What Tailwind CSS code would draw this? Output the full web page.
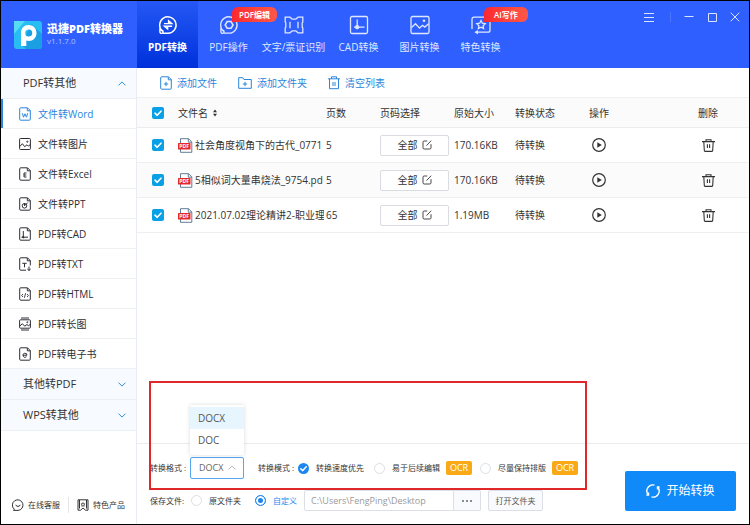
<!DOCTYPE html>
<html lang="zh-CN">

<head>
    <meta charset="UTF-8">
    <meta name="viewport" content="width=device-width, initial-scale=1.0">
    <title>迅捷PDF转换器</title>
    <script src="https://cdn.jsdelivr.net/npm/@tailwindcss/browser@4"></script>
</head>

<body class="font-['Open_Sans','Noto_Sans_CJK_SC',sans-serif] text-[10px] leading-4 text-[#333]">
    <!-- shared icons -->
    <svg class="hidden">
        <symbol id="page" viewBox="0 0 12 14">
            <path d="M8.5 .8H1.7a1 1 0 0 0-1 1v10.4a1 1 0 0 0 1 1h8.6a1 1 0 0 0 1-1V3.6zM8.3 1v2.8h3" fill="none" stroke="currentColor" />
        </symbol>
        <symbol id="pdf" viewBox="0 0 15 15">
            <path d="M2.5 .7h8l3.3 3.2v10.4H2.5z" fill="#fff" stroke="#4f6f8d" stroke-width=".9" />
            <path d="M10.3 .8v3.4h3.4" fill="none" stroke="#4f6f8d" stroke-width=".9" />
            <rect x="0" y="5" width="12.5" height="6.5" rx=".6" fill="#e5282c" />
            <text x="6.2" y="10.2" fill="#fff" font-size="5.2" font-weight="bold" text-anchor="middle">PDF</text>
        </symbol>
        <symbol id="tick" viewBox="0 0 12 12">
            <path d="M3 6.2l2.2 2.1L9 4.2" fill="none" stroke="#fff" stroke-width="1.6" stroke-linecap="round" stroke-linejoin="round" />
        </symbol>
        <symbol id="edit" viewBox="0 0 10 10">
            <path d="M5.2 1H2.2A1.2 1.2 0 0 0 1 2.2v5.6A1.2 1.2 0 0 0 2.2 9h5.6A1.2 1.2 0 0 0 9 7.8V4.2M4.5 5.6L9.2 .7" fill="none" stroke="currentColor" stroke-width=".9" />
        </symbol>
        <symbol id="play" viewBox="0 0 14 14">
            <circle cx="7" cy="7" r="6.3" fill="none" stroke="currentColor" stroke-width="1.2" />
            <path d="M5.3 4.3v5.4L9.8 7z" fill="currentColor" />
        </symbol>
        <symbol id="trash" viewBox="0 0 13 13">
            <path d="M0 2.6h13M4 2.4V.7h5v1.7M1.8 2.8l.5 8.4a1.2 1.2 0 0 0 1.2 1.2h6a1.2 1.2 0 0 0 1.2-1.2l.5-8.400M5.400 5.300v3.800M7.600 5.300v3.800" fill="none" stroke="currentColor" stroke-width="1.1" />
        </symbol>
        <symbol id="up" viewBox="0 0 8 5">
            <path d="M.5 4.4L4 .9l3.5 3.5" fill="none" stroke="currentColor" />
        </symbol>
        <symbol id="down" viewBox="0 0 8 5">
            <path d="M.5 .6L4 4.1 7.5 .6" fill="none" stroke="currentColor" />
        </symbol>
    </svg>

    <div class="relative flex h-screen flex-col border border-black bg-white">
        <header class="flex h-[67px] shrink-0 bg-[#2f60ff] text-white">
            <div class="flex w-[136px] shrink-0 items-center gap-[5px] pl-[13px]">
                <svg class="size-7 shrink-0" viewBox="0 0 28 28">
                    <rect width="28" height="28" rx="3" fill="#28bdf3" />
                    <path d="M0 0h11L0 13z" fill="#56dcf5" />
                    <path d="M17 3l11 10v12a3 3 0 0 1-3 3H12L8 24z" fill="#1697dc" opacity=".75" />
                    <path fill-rule="evenodd" d="M7 25V12C7 7 10 4 14.600 4S22.500 7.300 22.500 12s-3.300 8-7.700 8c-1 0-1.800-.2-2.500-.5V25zM14.700 8.500a3.500 3.500 0 1 0 0 7 3.500 3.500 0 0 0 0-7z" fill="#fff" />
                </svg>
                <div>
                    <h1 class="text-[11px] leading-3 font-black whitespace-nowrap">迅捷PDF转换器</h1>
                    <p class="text-[8px] leading-3 text-[#a9c0ff]">v1.1.7.0</p>
                </div>
            </div>
            <nav class="flex text-[#dfe7ff]">
                <a href="#" class="flex w-[61px] flex-col items-center gap-1 bg-linear-to-b from-[#2457f5] to-[#0030da] pt-3.5 font-bold text-white">
                    <svg class="size-5" viewBox="0 0 20 20" fill="none" stroke="currentColor" stroke-width="1.4">
                        <path d="M4.5 16.200A8.200 8.200 0 1 1 10 18.200H4.800M1.900 11v5.800a1.600 1.600 0 0 0 3.200 0c0-1-.7-1.600-1.600-1.600" />
                        <path d="M6 8.600h7.800L10.600 5.800v2.600M14.200 11.200H6.400l3.200 2.800v-2.600" />
                    </svg>
                    PDF转换
                </a>
                <a href="#" class="relative flex w-[61px] flex-col items-center gap-1 pt-3.5">
                    <svg class="size-5" viewBox="0 0 20 20" fill="none" stroke="currentColor" stroke-width="1.3">
                        <path d="M4.5 16.200A8.200 8.200 0 1 1 10 18.200H4.800M1.900 11v5.800a1.600 1.600 0 0 0 3.200 0c0-1-.7-1.600-1.600-1.600" />
                        <path d="M8.200 6.500h3.800l2 3.400-2 3.400H8.200l-2-3.400z" stroke-width="1.600" />
                    </svg>
                    PDF操作
                    <span class="absolute top-1.5 left-[34px] z-10 rounded-md rounded-bl-none bg-linear-to-r from-[#fb2630] to-[#ff5747] px-[7px] text-[8px] leading-[15px] font-semibold whitespace-nowrap text-white">PDF编辑</span>
                </a>
                <a href="#" class="flex w-[69px] flex-col items-center gap-1 pt-3.5 whitespace-nowrap">
                    <svg class="size-5" viewBox="0 0 20 20" fill="none" stroke="currentColor" stroke-width="1.3">
                        <path d="M1.200 2.200h4.800L8.200 4.200h3.600L14 2.200h4.800v4.800l-.6 1v4l.6 1v4.800H14l-2.200-2H8.200L6 17.800H1.200V13l.6-1V8l-.6-1zM6 6.800v6.400M14 6.800v6.400" />
                    </svg>
                    文字/票证识别
                </a>
                <a href="#" class="flex w-[61px] flex-col items-center gap-1 pt-3.5">
                    <svg class="size-5" viewBox="0 0 20 20" fill="none" stroke="currentColor" stroke-width="1.3">
                        <rect x="1.500" y="1.500" width="17" height="17" rx="1.500" />
                        <path d="M8.200 4.500v9M5 12.200h10.500" />
                        <circle cx="8.200" cy="12.200" r="1.500" fill="currentColor" />
                    </svg>
                    CAD转换
                </a>
                <a href="#" class="flex w-[61px] flex-col items-center gap-1 pt-3.5">
                    <svg class="size-5" viewBox="0 0 20 20" fill="none" stroke="currentColor" stroke-width="1.3">
                        <rect x="1" y="1.500" width="18" height="17" rx="1.500" />
                        <path d="M1.500 12.500l4-3.800 4 4.400 3-2.800 2.200 1.800 4-3.400" />
                        <circle cx="14" cy="5.800" r="1.300" fill="currentColor" stroke="none" />
                    </svg>
                    图片转换
                </a>
                <a href="#" class="relative flex w-[61px] flex-col items-center gap-1 pt-3.5">
                    <svg class="size-5" viewBox="0 0 20 20" fill="none" stroke="currentColor" stroke-width="1.3">
                        <path d="M1 14V4.200a2 2 0 0 1 2-2h14a2 2 0 0 1 2 2v11a2 2 0 0 1-2 2H4.500" />
                        <path d="M7 15l-3.500 2.200L7 19.400z" fill="currentColor" stroke="none" />
                        <path d="M10 5.500l1.300 2.700 2.900.4-2.100 2.100.5 2.900-2.600-1.400-2.600 1.400.5-2.900-2.100-2.100 2.900-.4z" />
                    </svg>
                    特色转换
                    <span class="absolute top-1.5 left-[34px] rounded-md rounded-bl-none bg-linear-to-r from-[#fb2630] to-[#ff5747] px-2.5 text-[8px] leading-[15px] font-semibold whitespace-nowrap text-white">AI写作</span>
                </a>
            </nav>
            <div class="ml-auto flex h-8 items-center gap-[13px] pr-[9px] text-[#dbe4ff]">
                <button aria-label="菜单" class="border-r border-[#4a75ff] pr-4">
                    <svg class="size-2.5" viewBox="0 0 10 10" stroke="currentColor"><path d="M0 1.500h10M0 5.500h10M0 9.500h10" /></svg>
                </button>
                <button aria-label="最小化">
                    <svg class="size-2.5" viewBox="0 0 10 10" stroke="currentColor"><path d="M.5 4.500h9" /></svg>
                </button>
                <button aria-label="最大化">
                    <svg class="size-2.5" viewBox="0 0 10 10" stroke="currentColor" fill="none"><path d="M1.500 1.500h8v8h-8z" /></svg>
                </button>
                <button aria-label="关闭">
                    <svg class="size-2.5" viewBox="0 0 10 10" stroke="currentColor"><path d="M.7 .7l8.600 8.600M9.300 .7L.7 9.300" /></svg>
                </button>
            </div>
        </header>

        <div class="flex min-h-0 flex-1">
            <aside class="flex w-[136px] shrink-0 flex-col border-r border-[#e9edf2]">
                <button class="flex h-[31px] items-center justify-between border-b border-[#eceff4] bg-[#f7faff] pr-2.5 pl-[22px] text-[11px]">
                    PDF转其他
                    <svg class="h-[5px] w-2 text-[#2e8fd8]"><use href="#up" /></svg>
                </button>
                <nav class="text-[#2d2d36] [&>a]:flex [&>a]:h-[30px] [&>a]:items-center [&>a]:gap-[7px] [&>a]:border-b [&>a]:border-[#eef0f4] [&>a]:pl-[18px] [&_svg]:h-3.5 [&_svg]:w-3">
                    <a href="#" class="relative text-[#2b85dc] before:absolute before:inset-y-0 before:left-0 before:w-0.5 before:bg-[#2b85dc]">
                        <svg viewBox="0 0 12 14" fill="none" stroke="currentColor"><use href="#page" /><path d="M3.300 6.200l1.200 4L6 6.800l1.500 3.400 1.200-4" /></svg>
                        文件转Word
                    </a>
                    <a href="#">
                        <svg viewBox="0 0 12 14" fill="none" stroke="currentColor"><rect x=".6" y="1.500" width="10.800" height="11" rx=".8" /><path d="M.8 9.500l2.600-2.800 2.300 3L8 7.800l1.300 1.300 2-1.500" /><circle cx="8.300" cy="4.700" r=".6" /></svg>
                        文件转图片
                    </a>
                    <a href="#">
                        <svg viewBox="0 0 12 14" fill="none" stroke="currentColor"><use href="#page" /><path d="M7.500 6H5v4h2.500M5 8h2.300" /></svg>
                        文件转Excel
                    </a>
                    <a href="#">
                        <svg viewBox="0 0 12 14" fill="none" stroke="currentColor"><use href="#page" /><circle cx="5.500" cy="8.800" r="2.300" /><path d="M5.500 8.800V6.300M5.500 8.800L8.800 5.500" /></svg>
                        文件转PPT
                    </a>
                    <a href="#">
                        <svg viewBox="0 0 12 14" fill="none" stroke="currentColor"><use href="#page" /><path d="M4.300 4v6.500M2.500 10.200h6.500" /><circle cx="4.300" cy="10.200" r=".7" fill="currentColor" /></svg>
                        PDF转CAD
                    </a>
                    <a href="#">
                        <svg viewBox="0 0 12 14" fill="none" stroke="currentColor"><path d="M7 13.200H1.700a1 1 0 0 1-1-1V1.800a1 1 0 0 1 1-1h6.800l2.800 2.800V8.500M8.300 1v2.800h3M3.300 6.300h4.400M5.500 6.300v4M10 9.500v4M8.300 12l1.700 1.500 1.700-1.500" /></svg>
                        PDF转TXT
                    </a>
                    <a href="#">
                        <svg viewBox="0 0 12 14" fill="none" stroke="currentColor"><use href="#page" /><path d="M4 7L2.600 8.500 4 10M8 7l1.400 1.500L8 10M6.600 6.200l-1.200 4.600" stroke-width=".9" /></svg>
                        PDF转HTML
                    </a>
                    <a href="#">
                        <svg viewBox="0 0 12 14" fill="none" stroke="currentColor"><rect x=".6" y="2.800" width="10.800" height="8.400" rx=".8" /><path d="M2 1h8M2 13h8M.8 9l2.600-2.300 2.300 2.500L8 7.500l1.300 1.200 2-1.300" /><circle cx="8.300" cy="5.200" r=".5" /></svg>
                        PDF转长图
                    </a>
                    <a href="#">
                        <svg viewBox="0 0 12 14" fill="none" stroke="currentColor"><use href="#page" /><path d="M4 8.200h4a2 2 0 1 0-.6 1.500" /></svg>
                        PDF转电子书
                    </a>
                </nav>
                <button class="flex h-[31px] items-center justify-between border-b border-[#eceff4] bg-[#f7faff] pr-2.5 pl-[22px] text-[11px]">
                    其他转PDF
                    <svg class="h-[5px] w-2 text-[#2e8fd8]"><use href="#down" /></svg>
                </button>
                <button class="flex h-[31px] items-center justify-between border-b border-[#eceff4] bg-[#f7faff] pr-2.5 pl-[22px] text-[11px]">
                    WPS转其他
                    <svg class="h-[5px] w-2 text-[#2e8fd8]"><use href="#down" /></svg>
                </button>
                <div class="mt-auto mb-[11px] flex items-center pl-[11px] text-[8px]">
                    <a href="#" class="flex items-center gap-1 border-r border-[#e6e6e6] pr-2">
                        <svg class="size-3" viewBox="0 0 12 12" fill="none" stroke="currentColor"><path d="M2.300 10.200A5.300 5.300 0 1 1 6 11.400H1.500l.8-1.200M3.800 5.800a2.300 2.300 0 0 0 4.400 0" /></svg>
                        在线客服
                    </a>
                    <a href="#" class="flex items-center gap-1 pl-2">
                        <svg class="size-3" viewBox="0 0 12 12" fill="none" stroke="currentColor"><path d="M2.500 9.500V.8h7v8.700M2.500 .8H1v10.400h2.500L6 9l2.500 2.200H11V.8H9.500" /><path d="M6 3.500l.6 1.200 1.400.2-1 1 .2 1.400L6 6.700l-1.200.6.2-1.400-1-1 1.400-.2z" stroke-width=".8" /></svg>
                        特色产品
                    </a>
                </div>
            </aside>

            <main class="flex min-w-0 flex-1 flex-col">
                <div class="flex h-[29px] shrink-0 items-center gap-[21px] pl-[23px] text-[#2b85dc]">
                    <button class="flex items-center gap-[5px]">
                        <svg class="h-3.5 w-3" viewBox="0 0 12 14" stroke="currentColor"><use href="#page" /><path d="M6 5.800v4.400M3.800 8h4.400" /></svg>
                        添加文件
                    </button>
                    <button class="flex items-center gap-[5px]">
                        <svg class="h-3.5 w-3.5" viewBox="0 0 14 14" fill="none" stroke="currentColor"><path d="M.7 12.300V1.700h4l1.200 1.800h7.400v8.800zM7 5.800v4.400M4.800 8h4.400" /></svg>
                        添加文件夹
                    </button>
                    <button class="flex items-center gap-[5px]">
                        <svg class="h-3.5 w-3" viewBox="0 0 12 14" fill="none" stroke="currentColor"><path d="M0 2.800h12M3.500 2.800V.8h5v2M1.500 2.800v9.900h9V2.800M5 6v4M7 6v4" /></svg>
                        清空列表
                    </button>
                </div>

                <table class="w-full table-fixed border-t border-[#eeeff1] text-left [&_td]:p-0 [&_th]:p-0 [&_th]:font-normal">
                    <colgroup>
                        <col class="w-[41px]">
                        <col class="w-[148px]">
                        <col class="w-[54px]">
                        <col class="w-[74px]">
                        <col class="w-[61px]">
                        <col class="w-[74px]">
                        <col>
                        <col class="w-[51px]">
                    </colgroup>
                    <thead>
                        <tr class="h-[30px] border-b border-[#ebecee] bg-[#fbfbfb]">
                            <th>
                                <label class="ml-[15px] grid size-3">
                                    <input type="checkbox" checked aria-label="全选" class="col-start-1 row-start-1 size-3 appearance-none rounded-xs bg-[#0aa0e6]">
                                    <svg class="pointer-events-none col-start-1 row-start-1 size-3"><use href="#tick" /></svg>
                                </label>
                            </th>
                            <th>
                                <span class="flex items-center gap-1">文件名
                                    <svg class="h-2 w-1.5" viewBox="0 0 6 8"><path d="M3 .5l2 2.800H1zM3 7.500l2-2.800H1z" fill="currentColor" /></svg>
                                </span>
                            </th>
                            <th>页数</th>
                            <th>页码选择</th>
                            <th>原始大小</th>
                            <th>转换状态</th>
                            <th>操作</th>
                            <th>删除</th>
                        </tr>
                    </thead>
                    <tbody>
                        <tr class="h-[35px] border-b border-[#eeeff1]">
                            <td>
                                <label class="ml-[15px] grid size-3">
                                    <input type="checkbox" checked aria-label="选择文件" class="col-start-1 row-start-1 size-3 appearance-none rounded-xs bg-[#0aa0e6]">
                                    <svg class="pointer-events-none col-start-1 row-start-1 size-3"><use href="#tick" /></svg>
                                </label>
                            </td>
                            <td>
                                <div class="mr-0.5 flex items-center gap-0.5 overflow-hidden whitespace-nowrap">
                                    <svg class="size-[15px] shrink-0"><use href="#pdf" /></svg>社会角度视角下的古代_0771
                                </div>
                            </td>
                            <td>5</td>
                            <td><button class="flex h-[21px] w-[69px] items-center justify-center gap-1 rounded-xs border border-[#d9dce0] bg-white">全部<svg class="size-2.5"><use href="#edit" /></svg></button></td>
                            <td>170.16KB</td>
                            <td>待转换</td>
                            <td><button aria-label="开始" class="ml-[3px] block"><svg class="size-3.5"><use href="#play" /></svg></button></td>
                            <td><button aria-label="删除" class="ml-1 block"><svg class="size-[13px]"><use href="#trash" /></svg></button></td>
                        </tr>
                        <tr class="h-[35px] border-b border-[#eeeff1] bg-[#fbfbfb]">
                            <td>
                                <label class="ml-[15px] grid size-3">
                                    <input type="checkbox" checked aria-label="选择文件" class="col-start-1 row-start-1 size-3 appearance-none rounded-xs bg-[#0aa0e6]">
                                    <svg class="pointer-events-none col-start-1 row-start-1 size-3"><use href="#tick" /></svg>
                                </label>
                            </td>
                            <td>
                                <div class="mr-0.5 flex items-center gap-0.5 overflow-hidden whitespace-nowrap">
                                    <svg class="size-[15px] shrink-0"><use href="#pdf" /></svg>5相似词大量串烧法_9754.pd
                                </div>
                            </td>
                            <td>5</td>
                            <td><button class="flex h-[21px] w-[69px] items-center justify-center gap-1 rounded-xs border border-[#d9dce0] bg-white">全部<svg class="size-2.5"><use href="#edit" /></svg></button></td>
                            <td>170.16KB</td>
                            <td>待转换</td>
                            <td><button aria-label="开始" class="ml-[3px] block"><svg class="size-3.5"><use href="#play" /></svg></button></td>
                            <td><button aria-label="删除" class="ml-1 block"><svg class="size-[13px]"><use href="#trash" /></svg></button></td>
                        </tr>
                        <tr class="h-[35px] border-b border-[#eeeff1]">
                            <td>
                                <label class="ml-[15px] grid size-3">
                                    <input type="checkbox" checked aria-label="选择文件" class="col-start-1 row-start-1 size-3 appearance-none rounded-xs bg-[#0aa0e6]">
                                    <svg class="pointer-events-none col-start-1 row-start-1 size-3"><use href="#tick" /></svg>
                                </label>
                            </td>
                            <td>
                                <div class="mr-0.5 flex items-center gap-0.5 overflow-hidden whitespace-nowrap">
                                    <svg class="size-[15px] shrink-0"><use href="#pdf" /></svg>2021.07.02理论精讲2-职业理
                                </div>
                            </td>
                            <td>65</td>
                            <td><button class="flex h-[21px] w-[69px] items-center justify-center gap-1 rounded-xs border border-[#d9dce0] bg-white">全部<svg class="size-2.5"><use href="#edit" /></svg></button></td>
                            <td>1.19MB</td>
                            <td>待转换</td>
                            <td><button aria-label="开始" class="ml-[3px] block"><svg class="size-3.5"><use href="#play" /></svg></button></td>
                            <td><button aria-label="删除" class="ml-1 block"><svg class="size-[13px]"><use href="#trash" /></svg></button></td>
                        </tr>
                    </tbody>
                </table>

                <footer class="mt-auto flex h-[81px] shrink-0 items-end justify-between border-t border-[#ececec] pr-[13px] pb-[13px] pl-[13px] text-[8px]">
                    <div class="flex flex-col gap-[11px] whitespace-nowrap">
                        <div class="flex h-[22px] items-center">
                            <label for="format" class="w-10">转换格式 :</label>
                            <div class="relative w-[54px]">
                                <select id="format" class="block h-[22px] w-full appearance-none rounded-xs border border-[#55a7ee] bg-white pl-2 text-[9px] text-[#666]">
                                    <option>DOCX</option>
                                    <option>DOC</option>
                                </select>
                                <svg class="pointer-events-none absolute top-2 right-2 h-[5px] w-2 text-[#b5b5b5]"><use href="#up" /></svg>
                                <ul class="absolute bottom-6 left-0 w-full rounded-xs bg-white pt-0.5 pb-1 text-[10px] leading-[22px] text-[#555] shadow-[0_0_4px_rgba(0,0,0,0.15)]">
                                    <li class="bg-[#e6f5fe] pl-2">DOCX</li>
                                    <li class="pl-2">DOC</li>
                                </ul>
                            </div>
                            <span class="ml-3.5 w-10">转换模式 :</span>
                            <label class="flex items-center gap-[7px]">
                                <span class="grid size-[11px]">
                                    <input type="radio" name="mode" checked class="col-start-1 row-start-1 size-[11px] appearance-none rounded-full bg-[#1b86ee]">
                                    <svg class="pointer-events-none col-start-1 row-start-1 size-[11px]" viewBox="0 0 12 12"><use href="#tick" /></svg>
                                </span>
                                转换速度优先
                            </label>
                            <label class="ml-2.5 flex items-center gap-[7px]">
                                <input type="radio" name="mode" class="size-[11px] appearance-none rounded-full border border-[#dcdfe3]">
                                易于后续编辑
                            </label>
                            <span class="ml-1.5 w-[26px] rounded-xs bg-[#faa916] text-center text-[9px] leading-3.5 text-white">OCR</span>
                            <label class="ml-2 flex items-center gap-[7px]">
                                <input type="radio" name="mode" class="size-[11px] appearance-none rounded-full border border-[#dcdfe3]">
                                尽量保持排版
                            </label>
                            <span class="ml-1.5 w-[26px] rounded-xs bg-[#faa916] text-center text-[9px] leading-3.5 text-white">OCR</span>
                        </div>
                        <div class="flex h-[21px] items-center">
                            <span class="w-[41px]">保存文件:</span>
                            <label class="flex items-center gap-[7px]">
                                <input type="radio" name="save" class="size-[11px] appearance-none rounded-full border border-[#dcdfe3]">
                                原文件夹
                            </label>
                            <label class="ml-3.5 flex items-center gap-[7px] text-[#1b86ee]">
                                <input type="radio" name="save" checked class="size-[11px] appearance-none rounded-full border border-[#1b86ee] bg-[#1b86ee] shadow-[inset_0_0_0_2px_#fff]">
                                自定义
                            </label>
                            <input type="text" value="C:\Users\FengPing\Desktop" aria-label="保存路径" class="ml-[7px] h-[21px] w-[150px] rounded-l-xs border border-[#dcdfe6] px-1.5 text-[9px] text-[#999]">
                            <button aria-label="浏览" class="flex h-[21px] w-[27px] items-center justify-center rounded-r-xs border border-l-0 border-[#dcdfe6] bg-[#f8fafd]">
                                <svg class="h-0.5 w-3" viewBox="0 0 12 2" fill="#666"><circle cx="2" cy="1" r="1" /><circle cx="6" cy="1" r="1" /><circle cx="10" cy="1" r="1" /></svg>
                            </button>
                            <button class="ml-[7px] h-[21px] w-[55px] rounded-xs border border-[#dcdfe6] bg-[#f8fafd] text-[#555]">打开文件夹</button>
                        </div>
                    </div>
                    <button class="flex h-10 w-[111px] items-center justify-center gap-1.5 rounded-xs bg-[#118af9] text-[12px] text-white">
                        <svg class="size-3.5" viewBox="0 0 14 14" fill="none" stroke="currentColor" stroke-width="1.4"><path d="M2.200 10.800A6.100 6.100 0 0 1 8.500 1.100M11.800 3.200A6.100 6.100 0 0 1 5.500 12.900M2.500 8.600v2.400H.4M11.500 5.400V3h2.100" /></svg>
                        开始转换
                    </button>
                </footer>
            </main>
        </div>

        <!-- highlight frame over the format and mode settings -->
        <div class="pointer-events-none absolute bottom-[34px] left-[148px] h-[109px] w-[438px] border-2 border-[#e0282b]"></div>
    </div>
</body>

</html>
